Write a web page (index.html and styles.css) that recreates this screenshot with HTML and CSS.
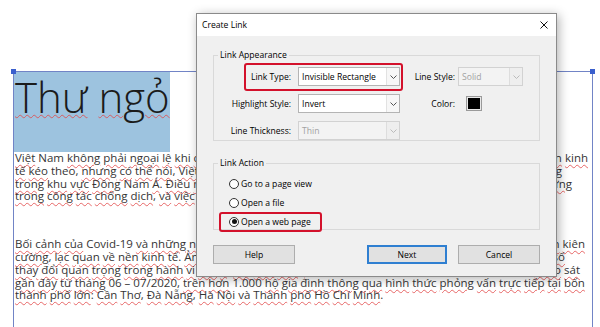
FILE: index.html
```html
<!DOCTYPE html>
<html lang="vi">
<head>
<meta charset="utf-8">
<title>Create Link</title>
<link rel="stylesheet" href="styles.css">
</head>
<body>
<div class="page">
  <div class="doc">
    <span class="handle handle-l"></span>
    <span class="handle handle-r"></span>
    <div class="title-block"><h1 class="title"><u>Thư</u> <u>ngỏ</u></h1></div>

    <div class="para">
      <div class="ln end-a"><span><u>Việt</u> Nam <u>không</u> <u>phải</u> <u>ngoại</u> <u>lệ</u> <u>khi</u> <u>chịu</u> <u>ảnh</u> <u>hưởng</u> <u>nặng</u> <u>nề</u></span><span><u>nền</u> <u>kinh</u></span></div>
      <div class="ln end-b"><span><u>tế</u> <u>kéo</u> theo, <u>nhưng</u> <u>có</u> <u>thể</u> <u>nói</u>, <u>Việt</u> Nam <u>vẫn</u> <u>là</u> <u>một</u></span><span><u>trong</u></span></div>
      <div class="ln end-c"><span><u>trong</u> <u>khu</u> <u>vực</u> <u>Đông</u> Nam <u>Á</u>. <u>Điều</u> <u>này</u> <u>thể</u> <u>hiện</u></span><span><u>những</u></span></div>
      <div class="ln"><span><u>trong</u> <u>công</u> <u>tác</u> <u>chống</u> <u>dịch</u>, <u>và</u> <u>việc</u> <u>phục</u> <u>hồi</u> <u>kinh</u> <u>tế</u>.</span></div>
    </div>

    <div class="para para-2">
      <div class="ln end-d"><span><u>Bối</u> <u>cảnh</u> <u>của</u> Covid-19 <u>và</u> <u>những</u> <u>nỗ</u> <u>lực</u> <u>đó</u> <u>giúp</u></span><span><u>tinh</u> <u>thần</u> <u>kiên</u></span></div>
      <div class="ln end-e"><span><u>cường</u>, <u>lạc</u> <u>quan</u> <u>về</u> <u>nền</u> <u>kinh</u> <u>tế</u>. <u>Ảnh</u> <u>hưởng</u> <u>này</u></span><span><u>chỉ</u> <u>số</u></span></div>
      <div class="ln end-f"><span><u>thay</u> <u>đổi</u> <u>quan</u> <u>trọng</u> <u>trong</u> <u>hành</u> <u>vi</u> <u>của</u> <u>người</u> <u>tiêu</u> <u>dùng</u></span><span><u>khảo</u> <u>sát</u></span></div>
      <div class="ln"><span><u>gần</u> <u>đây</u> <u>từ</u> <u>tháng</u> 06 – 07/2020, <u>trên</u> <u>hơn</u> 1.000 <u>hộ</u> <u>gia</u> <u>đình</u> <u>thông</u> <u>qua</u> <u>hình</u> <u>thức</u> <u>phỏng</u> <u>vấn</u> <u>trực</u> <u>tiếp</u> <u>tại</u> <u>bốn</u></span></div>
      <div class="ln"><span><u>thành</u> <u>phố</u> <u>lớn</u>: <u>Cần</u> <u>Thơ</u>, <u>Đà</u> <u>Nẵng</u>, <u>Hà</u> <u>Nội</u> <u>và</u> <u>Thành</u> <u>phố</u> <u>Hồ</u> <u>Chí</u> <u>Minh</u>.</span></div>
    </div>
  </div>

  <div class="dialog">
    <div class="titlebar">
      <span class="dlg-title">Create Link</span>
      <svg class="close" width="8" height="8" viewBox="0 0 8 8"><path d="M0.5 0.5 L7.5 7.5 M7.5 0.5 L0.5 7.5" stroke="#111" stroke-width="1" fill="none"/></svg>
    </div>
    <div class="dlg-body">
      <fieldset class="group group-appearance">
        <legend>Link Appearance</legend>
        <div class="form-grid">
          <label class="lbl">Link Type:</label>
          <div class="combo"><span class="combo-text">Invisible Rectangle</span><span class="combo-btn"><svg width="7" height="4" viewBox="0 0 7 4"><path d="M0.5 0.5 L3.5 3.5 L6.5 0.5" stroke="#555" fill="none"/></svg></span></div>
          <label class="lbl lbl-2">Line Style:</label>
          <div class="combo combo-disabled"><span class="combo-text">Solid</span><span class="combo-btn"><svg width="7" height="4" viewBox="0 0 7 4"><path d="M0.5 0.5 L3.5 3.5 L6.5 0.5" stroke="#bbb" fill="none"/></svg></span></div>

          <label class="lbl">Highlight Style:</label>
          <div class="combo"><span class="combo-text">Invert</span><span class="combo-btn"><svg width="7" height="4" viewBox="0 0 7 4"><path d="M0.5 0.5 L3.5 3.5 L6.5 0.5" stroke="#555" fill="none"/></svg></span></div>
          <label class="lbl lbl-2">Color:</label>
          <div class="swatch-cell"><span class="swatch"></span></div>

          <label class="lbl">Line Thickness:</label>
          <div class="combo combo-disabled"><span class="combo-text">Thin</span><span class="combo-btn"><svg width="7" height="4" viewBox="0 0 7 4"><path d="M0.5 0.5 L3.5 3.5 L6.5 0.5" stroke="#bbb" fill="none"/></svg></span></div>
        </div>
        <span class="callout callout-type"></span>
      </fieldset>

      <fieldset class="group group-action">
        <legend>Link Action</legend>
        <div class="radio-list">
          <div class="radio-row"><span class="radio"></span><span>Go to a page view</span></div>
          <div class="radio-row"><span class="radio"></span><span>Open a file</span></div>
          <div class="radio-row"><span class="radio radio-on"></span><span>Open a web page</span></div>
        </div>
        <span class="callout callout-web"></span>
      </fieldset>

      <div class="buttons">
        <button class="btn">Help</button>
        <span class="spacer"></span>
        <button class="btn btn-default">Next</button>
        <button class="btn">Cancel</button>
      </div>
    </div>
  </div>
</div>
</body>
</html>
```

FILE: styles.css
```css
html, body {
  margin: 0;
  padding: 0;
  background: #ffffff;
}
body {
  width: 600px;
  height: 327px;
  overflow: hidden;
  font-family: "Open Sans", "Noto Sans", sans-serif;
}
.page {
  position: relative;
  display: flow-root;
  width: 600px;
  height: 327px;
  overflow: hidden;
}

/* ---------- document ---------- */
.doc {
  position: relative;
  margin: 71px 7px 0 13px;
  height: 256px;
  border: 1px solid #7184c6;
  border-bottom: none;
}
.handle {
  position: absolute;
  top: -3px;
  width: 5px;
  height: 5px;
  background: #3a5fcd;
}
.handle-l { left: -3px; }
.handle-r { right: -3px; }

u {
  text-decoration-line: underline;
  text-decoration-style: wavy;
  text-decoration-color: rgba(226, 70, 70, 0.8);
  text-decoration-thickness: 1px;
  text-underline-offset: 2px;
}

.title-block {
  width: 156px;
  height: 80px;
  background: #9dc3df;
}
.title {
  margin: 0;
  padding-left: 1px;
  font-family: "Open Sans", sans-serif;
  font-weight: 300;
  font-size: 42px;
  line-height: 50px;
  color: #1b1b1b;
}
.title u { text-underline-offset: 1px; }

.para {
  padding: 0 4px 0 1px;
  font-size: 11.5px;
  line-height: 12.8px;
  color: #353535;
}
.para-2 { margin-top: 35px; }
.ln {
  display: flex;
  justify-content: space-between;
  white-space: nowrap;
}
.end-b { padding-right: 26px; }
.end-c { padding-right: 16px; }
.end-d { padding-right: 3px; }
.end-e { padding-right: 23px; }
.end-f { padding-right: 8px; }

/* ---------- dialog ---------- */
.dialog {
  position: absolute;
  left: 196px;
  top: 13px;
  width: 361px;
  height: 264px;
  box-sizing: border-box;
  border: 1px solid #8a8a8a;
  background: #f0f0f0;
  box-shadow: 2px 2px 10px rgba(0, 0, 0, 0.3);
  display: flex;
  flex-direction: column;
  font-size: 8.6px;
  color: #000;
}
.titlebar {
  height: 22px;
  background: #fff;
  display: flex;
  align-items: center;
  justify-content: space-between;
  padding: 0 8px 0 5px;
}
.dlg-body {
  flex: 1;
  padding: 13px 16px 12px 16px;
  display: flex;
  flex-direction: column;
}
.group {
  position: relative;
  margin: 0;
  padding: 0;
  border: 1px solid #d9d9d9;
  min-width: 0;
}
.group legend {
  margin-left: 4px;
  padding: 0 2px;
  line-height: 12px;
}
.group-appearance {
  height: 92px;
  box-sizing: border-box;
  padding-top: 6px;
}
.form-grid {
  display: grid;
  grid-template-columns: 84px 102px 58px 65px;
  grid-auto-rows: 19px;
  row-gap: 8px;
  align-items: center;
}
.lbl {
  text-align: right;
  padding-right: 7px;
  white-space: nowrap;
}
.lbl-2 { padding-right: 3px; }

.combo {
  height: 19px;
  box-sizing: border-box;
  border: 1px solid #b4b4b4;
  background: #fff;
  display: flex;
  align-items: center;
}
.combo-text {
  flex: 1;
  padding-left: 3px;
  white-space: nowrap;
}
.combo-btn {
  width: 12px;
  align-self: stretch;
  border-left: 1px solid #e2e2e2;
  background: #f7f7f7;
  display: flex;
  align-items: center;
  justify-content: center;
}
.combo-disabled {
  background: #f3f3f3;
  border-color: #d2d2d2;
  color: #a2a2a2;
}
.combo-disabled .combo-btn { background: #eeeeee; border-left-color: #dddddd; }
.swatch-cell { display: flex; align-items: center; }
.swatch {
  margin-left: 8px;
  width: 16px;
  height: 15px;
  box-sizing: border-box;
  border: 1px solid #9a9a9a;
  background: #000;
  box-shadow: inset 0 0 0 1px #e8e8e8;
}

.group-action {
  margin-top: 16px;
  height: 73px;
  box-sizing: border-box;
  padding: 5px 0 0 0;
}
.radio-list {
  display: flex;
  flex-direction: column;
  padding-left: 15px;
}
.radio-row {
  height: 19px;
  display: flex;
  align-items: center;
  gap: 2px;
}
.radio {
  width: 10px;
  height: 10px;
  box-sizing: border-box;
  border: 1px solid #333;
  border-radius: 50%;
  background: #fff;
  display: flex;
  align-items: center;
  justify-content: center;
}
.radio-on::after {
  content: "";
  width: 5px;
  height: 5px;
  border-radius: 50%;
  background: #111;
}

.callout {
  position: absolute;
  border: 2px solid #d3112b;
  border-radius: 3px;
}
.callout-type {
  left: 30px;
  top: 2px;
  width: 155px;
  height: 24px;
}
.callout-web {
  left: 5px;
  top: 43px;
  width: 99px;
  height: 16px;
}

.buttons {
  margin-top: 15px;
  display: flex;
  gap: 11px;
}
.spacer { flex: 1; }
.btn {
  width: 82px;
  height: 19px;
  padding: 0;
  border: 1px solid #adadad;
  background: #e1e1e1;
  font-family: inherit;
  font-size: 8.6px;
  color: #000;
}
.btn-default {
  width: 80px;
  border: 2px solid #2f7fd1;
}
```
